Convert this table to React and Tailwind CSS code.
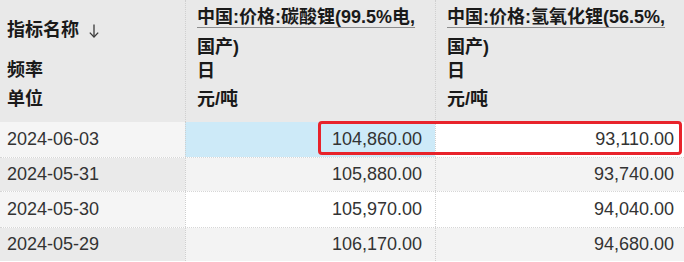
const FONT = "font-['Liberation_Sans','Noto_Sans_CJK_SC',sans-serif]";

const rows = [
  { date: '2024-06-03', a: '104,860.00', b: '93,110.00' },
  { date: '2024-05-31', a: '105,880.00', b: '93,740.00' },
  { date: '2024-05-30', a: '105,970.00', b: '94,040.00' },
  { date: '2024-05-29', a: '106,170.00', b: '94,680.00' },
];

const rowHeights = ['h-[35px]', 'h-[34px]', 'h-[36px]', 'h-[34px]'];

function SortArrow() {
  return (
    <svg width="10" height="14" viewBox="0 0 10 14" className="ml-[10px] mt-[2px]" fill="none" stroke="#3a3a3a" strokeWidth="1.3">
      <path d="M5 0.5V13" />
      <path d="M0.8 8.6L5 13L9.2 8.6" />
    </svg>
  );
}

function SeriesHeader({ line1, line2 }) {
  return (
    <div className="border-l border-dotted border-[#cfcfcf] pl-[11px] pt-[3px] text-[18px] font-bold text-[#1a1a1a]">
      <div className="flex h-[28px] items-center">
        <span className="underline decoration-[#8c8c8c] underline-offset-[4px]">{line1}</span>
      </div>
      <div className="flex h-[32px] items-center">{line2}</div>
      <div className="flex h-[16px] items-center">日</div>
      <div className="flex h-[40px] items-center">元/吨</div>
    </div>
  );
}

export default function App() {
  return (
    <div className={`relative h-[262px] w-[684px] overflow-hidden bg-white ${FONT}`}>
      {/* Header */}
      <div className="grid h-[122px] grid-cols-[185px_250px_1fr] bg-[#e9e9e9]">
        <div className="pl-[7px] text-[18px] font-bold text-[#1a1a1a]">
          <div className="flex h-[60px] items-center">
            指标名称
            <SortArrow />
          </div>
          <div className="flex h-[20px] items-center">频率</div>
          <div className="flex h-[38px] items-center">单位</div>
        </div>
        <SeriesHeader line1="中国:价格:碳酸锂(99.5%电," line2="国产)" />
        <SeriesHeader line1="中国:价格:氢氧化锂(56.5%," line2="国产)" />
      </div>

      {/* Data rows */}
      {rows.map((r, i) => {
        const odd = i % 2 === 0;
        return (
          <div
            key={r.date}
            className={`grid grid-cols-[185px_250px_1fr] text-[18px] text-[#333] ${rowHeights[i]} ${
              i > 0 ? 'border-t border-dotted border-[#d6d6d6]' : ''
            }`}
          >
            <div className={`flex items-center pl-[7px] ${odd ? 'bg-[#f5f5f5]' : 'bg-[#eaeaea]'}`}>{r.date}</div>
            <div
              className={`flex items-center justify-end border-l border-dotted border-[#cfcfcf] pr-[13px] ${
                i === 0 ? 'bg-[#cdeaf8]' : odd ? 'bg-white' : 'bg-[#f3f3f3]'
              }`}
            >
              {r.a}
            </div>
            <div
              className={`flex items-center justify-end border-l border-dotted border-[#cfcfcf] pr-[10px] ${
                odd ? 'bg-white' : 'bg-[#f3f3f3]'
              }`}
            >
              {r.b}
            </div>
          </div>
        );
      })}

      {/* Annotation box */}
      <div className="pointer-events-none absolute left-[318px] top-[121px] h-[34px] w-[364px] rounded-[4px] border-[3px] border-[#e8232b]" />
    </div>
  );
}
